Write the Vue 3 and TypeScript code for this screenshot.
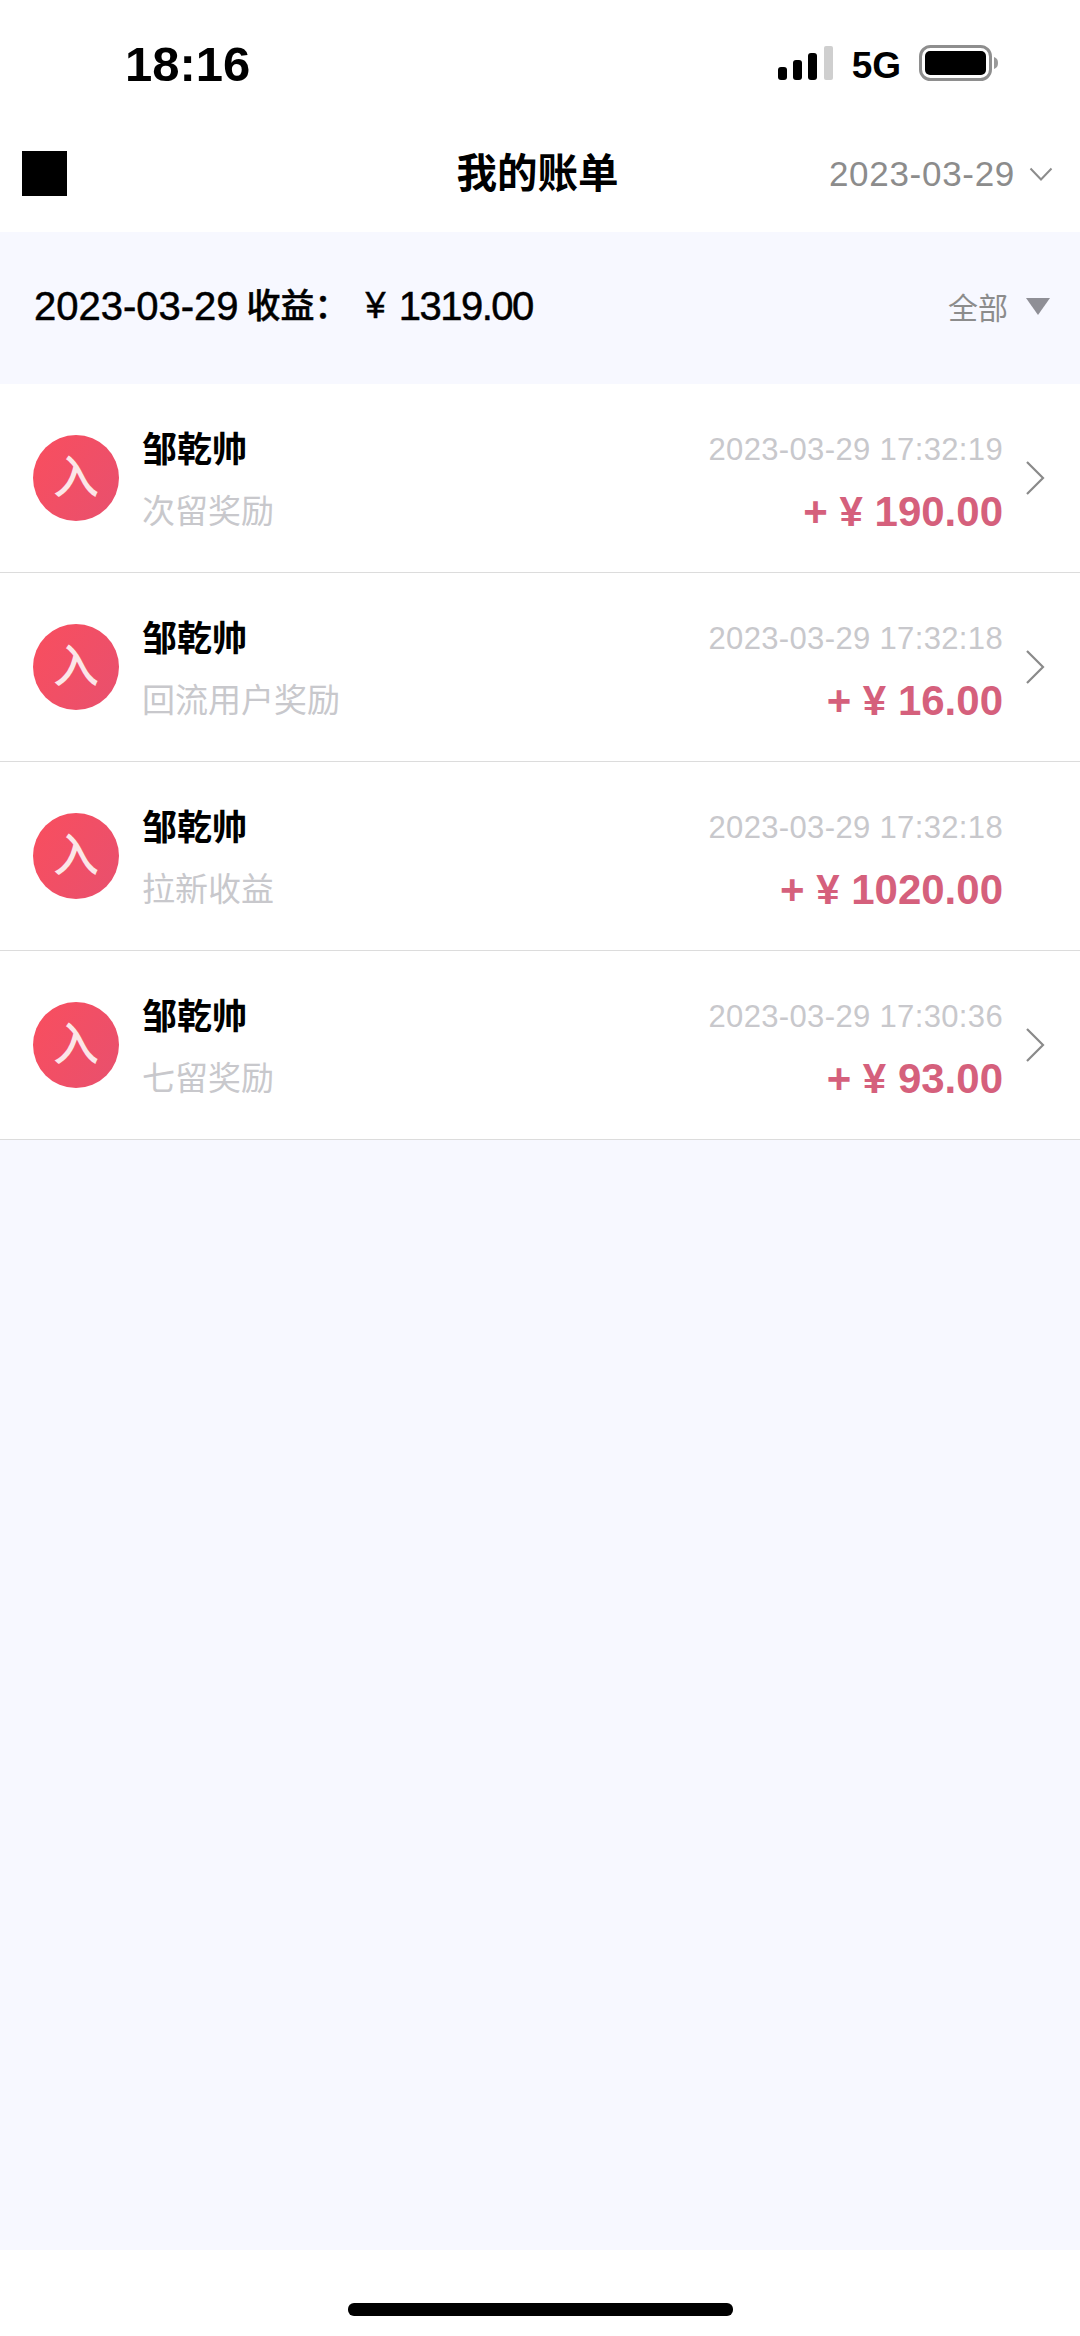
<template>
  <div class="page">
    <header class="top">
      <div class="status">
        <span class="clock">18:16</span>
        <div class="status-right">
          <svg class="signal" width="56" height="34" viewBox="0 0 56 34">
            <rect x="0" y="21" width="9" height="13" rx="3" fill="#000" />
            <rect x="15" y="14" width="9" height="20" rx="3" fill="#000" />
            <rect x="30" y="7" width="9" height="27" rx="3" fill="#000" />
            <rect x="46" y="0" width="9" height="34" rx="2" fill="#cfcfcf" />
          </svg>
          <span class="net">5G</span>
          <svg class="battery" width="80" height="36" viewBox="0 0 80 36">
            <rect x="1.5" y="1.5" width="70" height="33" rx="10" fill="none" stroke="#8e8e8e" stroke-width="3" />
            <rect x="6" y="6" width="61" height="24" rx="5" fill="#000" />
            <path d="M75 12c3 1 4 3 4 6s-1 5-4 6z" fill="#9a9a9a" />
          </svg>
        </div>
      </div>
      <nav class="nav">
        <div class="back"></div>
        <h1 class="title">我的账单</h1>
        <div class="date-pick">
          <span>2023-03-29</span>
          <svg width="24" height="14" viewBox="0 0 24 14">
            <path d="M1.5 1.5 12 12.5 22.5 1.5" fill="none" stroke="#8c8c8c" stroke-width="2" />
          </svg>
        </div>
      </nav>
    </header>

    <section class="summary">
      <div class="total">
        <span class="total-date">2023-03-29</span>
        <span class="total-label">收益：</span>
        <span class="total-yen">¥</span>
        <span class="total-num">1319.00</span>
      </div>
      <div class="filter">
        <span>全部</span>
        <i class="caret"></i>
      </div>
    </section>

    <ul class="list">
      <li v-for="item in bills" :key="item.time + item.label" class="row">
        <div class="avatar">入</div>
        <div class="info">
          <div class="name">{{ item.name }}</div>
          <div class="label">{{ item.label }}</div>
        </div>
        <div class="right">
          <div class="time">{{ item.time }}</div>
          <div class="amount">+ ¥ {{ item.amount }}</div>
        </div>
        <div class="arrow-slot">
          <svg v-if="item.arrow" width="20" height="36" viewBox="0 0 20 36">
            <path d="M2 2 18 18 2 34" fill="none" stroke="#8a8a8a" stroke-width="2.2" />
          </svg>
        </div>
      </li>
    </ul>

    <div class="spacer"></div>

    <footer class="home">
      <div class="home-bar"></div>
    </footer>
  </div>
</template>

<script setup lang="ts">
interface Bill {
  name: string;
  label: string;
  time: string;
  amount: string;
  arrow: boolean;
}

const bills: Bill[] = [
  { name: '邹乾帅', label: '次留奖励', time: '2023-03-29 17:32:19', amount: '190.00', arrow: true },
  { name: '邹乾帅', label: '回流用户奖励', time: '2023-03-29 17:32:18', amount: '16.00', arrow: true },
  { name: '邹乾帅', label: '拉新收益', time: '2023-03-29 17:32:18', amount: '1020.00', arrow: false },
  { name: '邹乾帅', label: '七留奖励', time: '2023-03-29 17:30:36', amount: '93.00', arrow: true },
];
</script>

<style>
html,
body {
  margin: 0;
  background: #fff;
}
</style>

<style scoped>
.page {
  width: 1080px;
  height: 2336px;
  display: flex;
  flex-direction: column;
  background: #f7f8ff;
  font-family: "Liberation Sans", "Noto Sans CJK SC", sans-serif;
  color: #000;
  overflow: hidden;
}

.top {
  background: #fff;
  height: 232px;
  box-sizing: border-box;
}

.status {
  height: 116px;
  box-sizing: border-box;
  padding: 38px 81px 0 125px;
  display: flex;
  justify-content: space-between;
  align-items: flex-start;
}

.clock {
  font-size: 49px;
  line-height: 52px;
  font-weight: 700;
}

.status-right {
  display: flex;
  align-items: center;
  gap: 18px;
  padding-top: 7px;
}

.net {
  font-size: 37px;
  line-height: 36px;
  font-weight: 700;
  position: relative;
  top: 3px;
}

.nav {
  height: 116px;
  box-sizing: border-box;
  padding: 0 27px 0 22px;
  display: grid;
  grid-template-columns: 1fr auto 1fr;
  align-items: center;
}

.back {
  width: 45px;
  height: 45px;
  background: #000;
  margin-bottom: 1px;
}

.title {
  margin: 0;
  font-size: 40.5px;
  line-height: 48px;
  font-weight: 700;
}

.date-pick {
  justify-self: end;
  display: flex;
  align-items: center;
  gap: 14px;
  font-size: 35px;
  letter-spacing: 0.7px;
  color: #8c8c8c;
}

.summary {
  height: 152px;
  box-sizing: border-box;
  padding: 0 30px 4px 34px;
  display: flex;
  justify-content: space-between;
  align-items: center;
}

.total {
  display: flex;
  align-items: center;
  font-size: 40px;
  line-height: 48px;
  font-weight: 500;
  -webkit-text-stroke: 0.5px #000;
}

.total-label {
  margin-left: 8px;
  font-size: 34px;
}

.total-yen {
  margin-left: 17px;
  font-size: 36px;
}

.total-num {
  margin-left: 13px;
  letter-spacing: -1.5px;
}

.filter {
  display: flex;
  align-items: center;
  gap: 18px;
  font-size: 30px;
  color: #8c8c8c;
}

.caret {
  width: 0;
  height: 0;
  border-left: 12px solid transparent;
  border-right: 12px solid transparent;
  border-top: 17px solid #8f8f96;
}

.list {
  list-style: none;
  margin: 0;
  padding: 0;
  background: #fff;
}

.row {
  height: 189px;
  box-sizing: border-box;
  border-bottom: 1.5px solid #dcdcdc;
  padding: 0 35px 0 33px;
  display: flex;
  align-items: center;
}

.avatar {
  width: 86px;
  height: 86px;
  border-radius: 50%;
  background: linear-gradient(120deg, #f94e5e, #e8506e);
  color: #fbe6e8;
  font-size: 46px;
  font-weight: 500;
  line-height: 84px;
  text-align: center;
  flex: none;
}

.info {
  margin-left: 23px;
  flex: 1;
  padding-top: 6px;
}

.name {
  font-size: 35px;
  line-height: 44px;
  font-weight: 700;
}

.label {
  margin-top: 18px;
  font-size: 33px;
  line-height: 44px;
  color: #c8c8cc;
}

.right {
  text-align: right;
  padding-top: 6px;
}

.time {
  font-size: 31px;
  line-height: 44px;
  letter-spacing: 0.35px;
  color: #c8c8cc;
}

.amount {
  margin-top: 18px;
  font-size: 42px;
  line-height: 44px;
  font-weight: 700;
  color: #d5607c;
}

.arrow-slot {
  width: 42px;
  display: flex;
  justify-content: flex-end;
  flex: none;
}

.spacer {
  flex: 1;
}

.home {
  height: 86px;
  background: #fff;
  display: flex;
  justify-content: center;
  padding-top: 53px;
  box-sizing: border-box;
}

.home-bar {
  width: 385px;
  height: 13px;
  border-radius: 6px;
  background: #000;
}
</style>
